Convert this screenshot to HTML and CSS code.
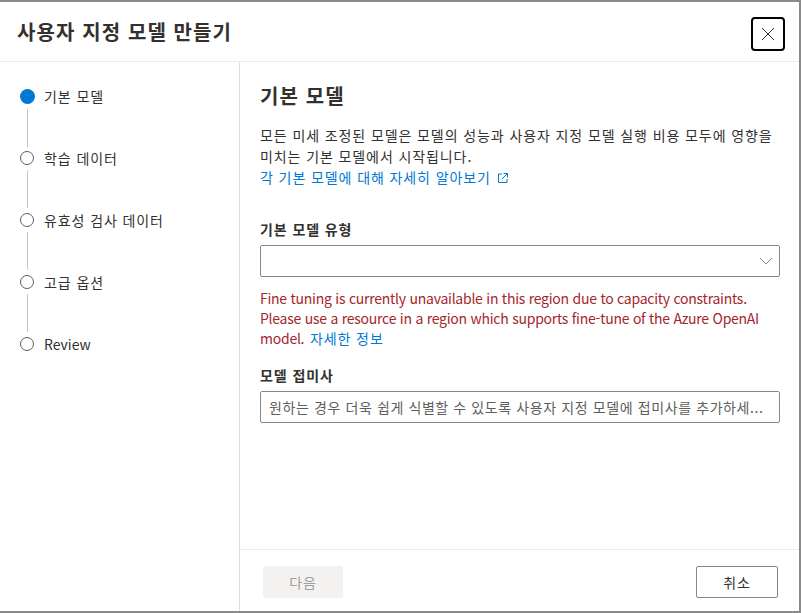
FILE: index.html
```html
<!DOCTYPE html>
<html lang="ko">
<head>
<meta charset="utf-8">
<link rel="stylesheet" href="styles.css">
</head>
<body>
<div class="dialog">
  <header class="header">
    <h1 class="title">사용자 지정 모델 만들기</h1>
    <button class="close" aria-label="닫기">
      <svg width="14" height="14" viewBox="0 0 14 14"><path d="M1 1L13 13M13 1L1 13" stroke="#323130" stroke-width="1" fill="none"/></svg>
    </button>
  </header>
  <div class="body">
    <nav class="steps">
      <div class="step active"><div class="marker"><span class="dot"></span><span class="line"></span></div><span class="label">기본 모델</span></div>
      <div class="step"><div class="marker"><span class="dot"></span><span class="line"></span></div><span class="label">학습 데이터</span></div>
      <div class="step"><div class="marker"><span class="dot"></span><span class="line"></span></div><span class="label">유효성 검사 데이터</span></div>
      <div class="step"><div class="marker"><span class="dot"></span><span class="line"></span></div><span class="label">고급 옵션</span></div>
      <div class="step last"><div class="marker"><span class="dot"></span></div><span class="label latin">Review</span></div>
    </nav>
    <div class="main">
      <div class="content">
        <h2 class="heading">기본 모델</h2>
        <p class="desc">모든 미세 조정된 모델은 모델의 성능과 사용자 지정 모델 실행 비용 모두에 영향을 미치는 기본 모델에서 시작됩니다.<br><a class="link" href="#">각 기본 모델에 대해 자세히 알아보기 <svg class="ext" width="12" height="12" viewBox="0 0 12 12"><path d="M6.5 1.5H10.5V5.5M10.5 1.5L5 7M5 2H1.5V10.5H10V7" stroke="#0078d4" stroke-width="1" fill="none"/></svg></a></p>
        <label class="field-label">기본 모델 유형</label>
        <div class="select">
          <svg width="14" height="8" viewBox="0 0 14 8"><path d="M1 1L7 7L13 1" stroke="#8a8886" stroke-width="1" fill="none"/></svg>
        </div>
        <p class="error">Fine tuning is currently unavailable in this region due to capacity constraints. Please use a resource in a region which supports fine-tune of the Azure OpenAI model. <a class="link ko" href="#">자세한 정보</a></p>
        <label class="field-label second">모델 접미사</label>
        <div class="input"><span class="placeholder">원하는 경우 더욱 쉽게 식별할 수 있도록 사용자 지정 모델에 접미사를 추가하세...</span></div>
      </div>
      <footer class="footer">
        <button class="btn disabled">다음</button>
        <button class="btn default">취소</button>
      </footer>
    </div>
  </div>
</div>
</body>
</html>
```

FILE: styles.css
```css
* { box-sizing: border-box; }
html, body { margin: 0; padding: 0; }
body {
  font-family: "Noto Sans CJK KR", "Noto Sans", sans-serif;
  color: #323130;
  background: #fff;
  letter-spacing: 0.9px;
}
.dialog {
  width: 801px;
  height: 613px;
  border-top: 2px solid #8a8a8a;
  border-right: 2px solid #8a8a8a;
  border-bottom: 2px solid #8a8a8a;
  display: flex;
  flex-direction: column;
  background: #fff;
}
.header {
  height: 60px;
  flex: none;
  border-bottom: 1px solid #edebe9;
  display: flex;
  align-items: center;
  justify-content: space-between;
  padding: 0 14px 0 17px;
}
.title {
  margin: 0;
  font-size: 20px;
  font-weight: 600;
  line-height: 28px;
  letter-spacing: 1.1px;
  color: #323130;
}
.close {
  width: 34px;
  height: 34px;
  border: 2px solid #000;
  border-radius: 4px;
  background: #fff;
  display: flex;
  align-items: center;
  justify-content: center;
  padding: 0;
  margin-top: 4px;
}
.body {
  flex: 1;
  display: flex;
  min-height: 0;
}
.steps {
  width: 240px;
  flex: none;
  border-right: 1px solid #e1dfdd;
  padding: 27px 0 0 20px;
}
.step {
  display: flex;
  height: 62px;
}
.marker {
  width: 14px;
  display: flex;
  flex-direction: column;
  align-items: center;
}
.dot {
  width: 14px;
  height: 14px;
  border-radius: 50%;
  border: 1px solid #605e5c;
  background: #fff;
  flex: none;
}
.step.active .dot {
  width: 15px;
  height: 15px;
  border: none;
  background: #0078d4;
}
.line {
  width: 1px;
  height: 38px;
  margin-top: 5px;
  background: #c8c6c4;
}
.label {
  margin-left: 10px;
  font-size: 14px;
  line-height: 14px;
  color: #323130;
}
.label.latin { letter-spacing: 0; }
.main {
  flex: 1;
  min-width: 0;
  display: flex;
  flex-direction: column;
}
.content {
  flex: 1;
  min-width: 0;
  padding: 20px 19px 0 20px;
}
.heading {
  margin: 0;
  font-size: 20px;
  font-weight: 600;
  line-height: 28px;
  letter-spacing: 1.1px;
}
.desc {
  margin: 15px 0 0;
  font-size: 14px;
  line-height: 21px;
  color: #323130;
}
.link {
  color: #0078d4;
  text-decoration: none;
}
.ext { vertical-align: -1px; margin-left: 1px; }
.field-label {
  display: block;
  margin-top: 31px;
  font-size: 14px;
  font-weight: 600;
  line-height: 20px;
  padding-bottom: 6px;
}
.field-label.second { margin-top: 17px; }
.select, .input {
  height: 32px;
  border: 1px solid #8a8886;
  border-radius: 2px;
  display: flex;
  align-items: center;
}
.select { justify-content: flex-end; padding-right: 6px; }
.input {
  padding: 0 8px;
  font-size: 14px;
  color: #605e5c;
  min-width: 0;
}
.placeholder {
  white-space: nowrap;
  min-width: 0;
  letter-spacing: 0.6px;
}
.error {
  margin: 11px 0 0;
  font-size: 14px;
  line-height: 20px;
  letter-spacing: -0.25px;
  color: #a4262c;
}
.error .ko {
  display: inline-block;
  line-height: 20px;
  vertical-align: top;
  letter-spacing: 0.9px;
  margin-left: 2px;
}
.footer {
  height: 62px;
  flex: none;
  border-top: 1px solid #edebe9;
  display: flex;
  justify-content: space-between;
  align-items: flex-start;
  padding: 16px 21px 0 23px;
}
.btn {
  height: 32px;
  font-family: inherit;
  font-size: 14px;
  letter-spacing: 0.9px;
  border-radius: 2px;
  padding: 0;
}
.btn.disabled {
  width: 80px;
  background: #f3f2f1;
  border: none;
  color: #a19f9d;
}
.btn.default {
  width: 82px;
  background: #fff;
  border: 1px solid #8a8886;
  color: #323130;
}
```
